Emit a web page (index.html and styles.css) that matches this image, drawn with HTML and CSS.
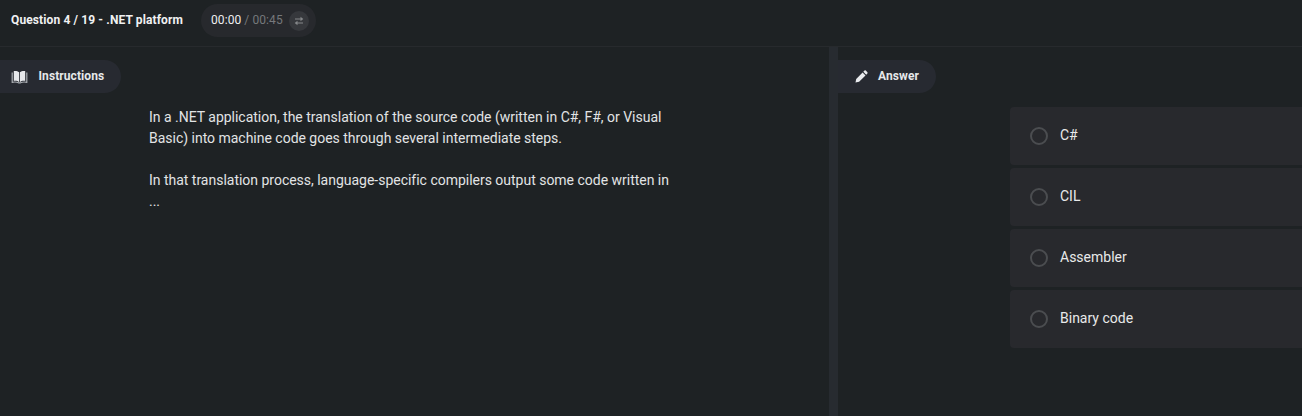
FILE: index.html
```html
<!DOCTYPE html>
<html lang="en">
<head>
<meta charset="utf-8">
<title>Question 4 / 19 - .NET platform</title>
<link rel="stylesheet" href="styles.css">
</head>
<body>
<header class="topbar">
  <h1 class="title">Question 4 / 19 - .NET platform</h1>
  <div class="timer">
    <span class="time"><span class="elapsed">00:00</span> / 00:45</span>
    <button class="swap" aria-label="Switch timer">
      <svg width="10" height="10" viewBox="0 0 10 10"><path d="M1 3H7M9 7H3" stroke="currentColor" stroke-width="1.2" fill="none"/><path d="M6.5 .8L9.3 3L6.5 5.2ZM3.5 4.8L.7 7L3.5 9.2Z" fill="currentColor"/></svg>
    </button>
  </div>
</header>
<main class="panes">
  <section class="pane">
    <h2 class="tab">
      <svg class="book" width="17" height="14" viewBox="0 0 17 14"><path d="M8.1 2.3C6.5.9 4.5.7 2.8 1.1V10.9C4.7 10.5 6.6 10.8 8.1 12.2ZM8.9 2.3C10.5.9 12.5.7 14.2 1.1V10.9C12.3 10.5 10.4 10.8 8.9 12.2Z" fill="#e6e8eb"/><path d="M1.2 2.5V12.3C3.6 11.8 5.8 12 7.5 12.8H9.5C11.2 12 13.4 11.8 15.8 12.3V2.5" fill="none" stroke="#a9adb2" stroke-width="1.2"/></svg>
      <span>Instructions</span>
    </h2>
    <div class="statement">
      <p>In a .NET application, the translation of the source code (written in C#, F#, or Visual<br>Basic) into machine code goes through several intermediate steps.</p>
      <p>In that translation process, language-specific compilers output some code written in<br>...</p>
    </div>
  </section>
  <div class="divider"></div>
  <section class="pane answer">
    <h2 class="tab">
      <svg class="pencil" width="13" height="13" viewBox="0 0 13 13"><path d="M.5 12.5L1.2 8.9L7.6 2.5L10.5 5.4L4.1 11.8ZM8.3 1.8L9.5.6Q10.1.1 10.8.6L12.4 2.2Q12.9 2.9 12.4 3.5L11.2 4.7Z" fill="#e9ebee"/></svg>
      <span>Answer</span>
    </h2>
    <div class="options">
      <label class="option"><span class="radio"></span>C#</label>
      <label class="option"><span class="radio"></span>CIL</label>
      <label class="option"><span class="radio"></span>Assembler</label>
      <label class="option"><span class="radio"></span>Binary code</label>
    </div>
  </section>
</main>
</body>
</html>
```
FILE: styles.css
```css
* { box-sizing: border-box; }
body {
  margin: 0;
  height: 416px;
  display: flex;
  flex-direction: column;
  overflow: hidden;
  background: #1e2224;
  color: #e2e4e5;
  font: 14px/21px Roboto, sans-serif;
}
h1, h2, p { margin: 0; }
.topbar {
  display: flex;
  align-items: flex-start;
  height: 47px;
  padding: 4px 0 0 11px;
  border-bottom: 1px solid #272a2d;
}
.title {
  width: 190px;
  padding-top: 6px;
  font-size: 12px;
  font-weight: 700;
  letter-spacing: 0.12px;
  color: #f0f1f2;
  white-space: nowrap;
}
.timer {
  display: flex;
  align-items: center;
  justify-content: space-between;
  width: 115px;
  height: 33px;
  padding: 0 7px 0 10px;
  border-radius: 17px;
  background: #27292d;
}
.time { font-size: 12px; letter-spacing: 0.08px; color: #75787b; white-space: nowrap; }
.elapsed { color: #eeeff0; }
.swap {
  display: flex;
  align-items: center;
  justify-content: center;
  width: 20px;
  height: 20px;
  padding: 0;
  border: 0;
  border-radius: 50%;
  background: #36383c;
  color: #85878a;
}
.panes {
  flex: 1;
  display: grid;
  grid-template-columns: 829px 9px 464px;
}
.pane { padding-top: 13px; }
.tab {
  display: flex;
  align-items: center;
  width: 121px;
  height: 33px;
  padding-left: 11px;
  border-radius: 0 17px 17px 0;
  background: #272a31;
  color: #e6e8ea;
  font-size: 12px;
  font-weight: 700;
  letter-spacing: 0.08px;
}
.book { margin-right: 10.5px; }
.pencil { margin-right: 10px; }
.answer .tab { width: 98px; padding-left: 17px; }
.divider { background: #272b30; }
.statement {
  padding: 14px 0 0 149px;
  letter-spacing: -0.015px;
  white-space: nowrap;
}
.statement p + p { margin-top: 21px; }
.options {
  display: flex;
  flex-direction: column;
  gap: 3px;
  padding: 14px 0 0 172px;
}
.option {
  display: flex;
  align-items: center;
  gap: 12px;
  height: 58px;
  padding: 0 0 1px 20px;
  border-radius: 4px 0 0 4px;
  background: #28292d;
  color: #e8e9ea;
}
.radio {
  width: 18px;
  height: 18px;
  border: 2px solid #4b4d50;
  border-radius: 50%;
}
```
